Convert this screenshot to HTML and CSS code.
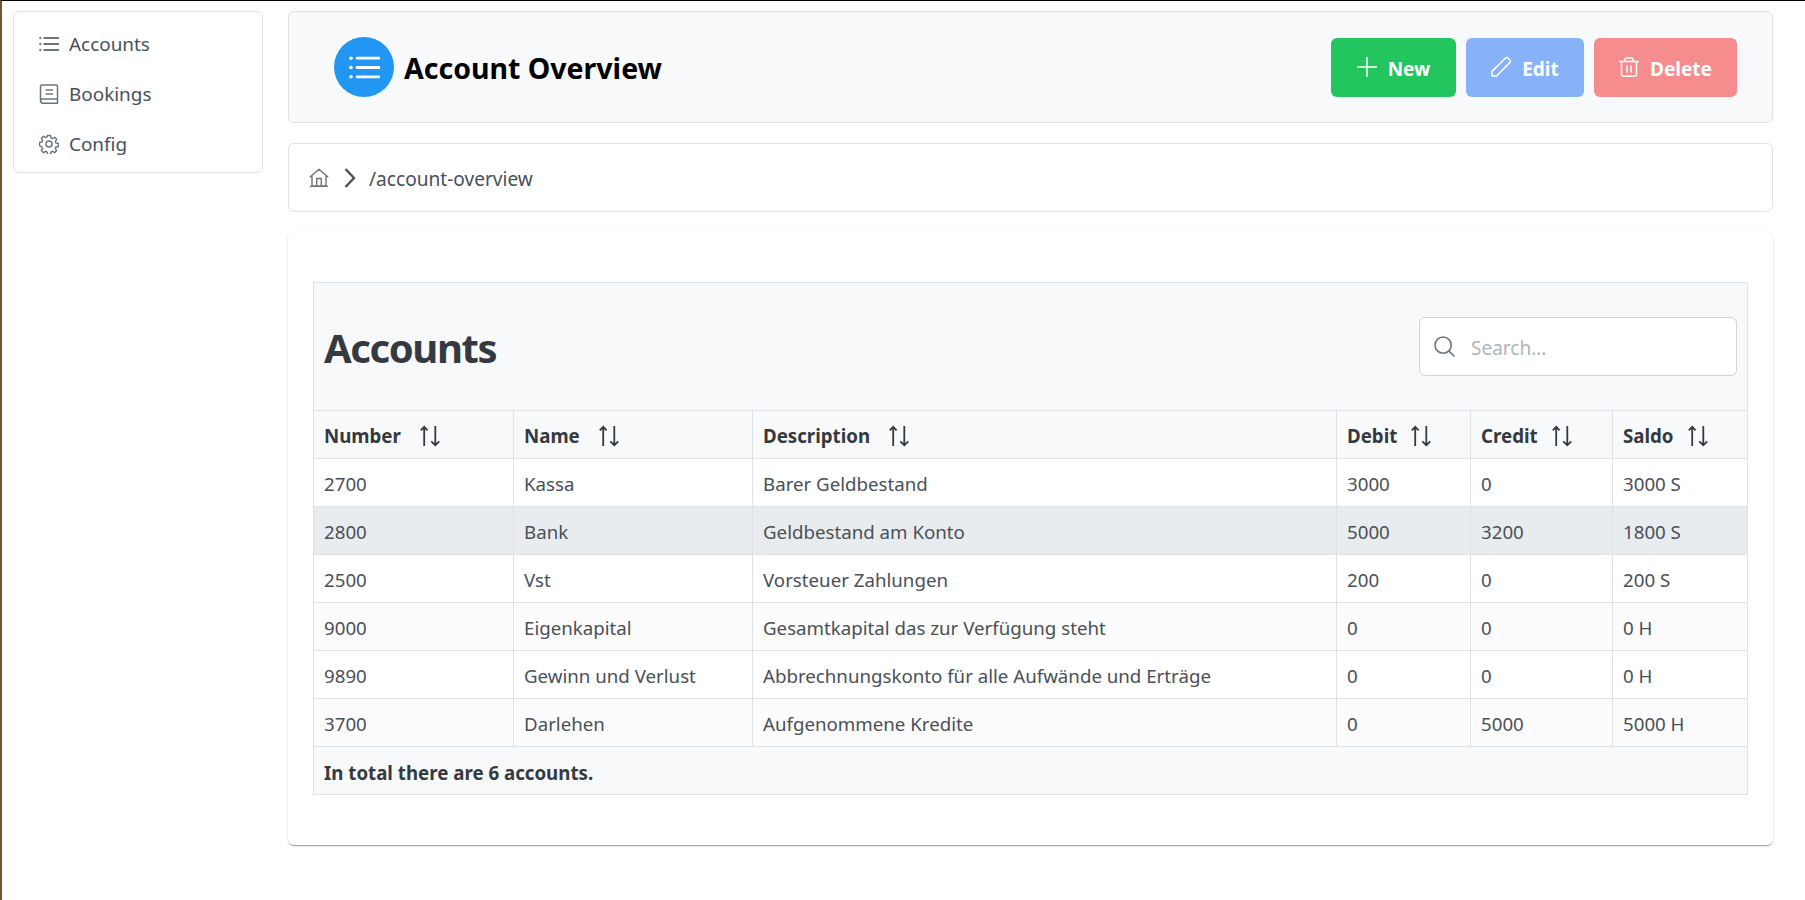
FILE: index.html
```html
<!DOCTYPE html>
<html lang="en">
<head>
<meta charset="utf-8">
<title>Account Overview</title>
<link rel="stylesheet" href="styles.css">
</head>
<body>
<svg class="defs" width="0" height="0" aria-hidden="true">
  <symbol id="list" viewBox="0 0 20 20"><path d="M5.200 4h14.300M5.200 10h14.300M5.200 16h14.300" fill="none" stroke="currentColor" stroke-width="1.800" stroke-linecap="round"/><circle cx="1.300" cy="4" r="1.150"/><circle cx="1.300" cy="10" r="1.150"/><circle cx="1.300" cy="16" r="1.150"/></symbol>
  <symbol id="sort" viewBox="0 0 20 22"><path d="M4.200 21V1.800M.8 5.400l3.400-3.600 3.400 3.600M15.300 1v19.200M11.300 16.400l4 3.800 4-3.800" fill="none" stroke="currentColor" stroke-width="1.800"/></symbol>
</svg>
<div class="layout">
  <nav class="sidebar">
    <a class="nav-item"><svg class="nav-icon"><use href="#list"/></svg>Accounts</a>
    <a class="nav-item"><svg class="nav-icon nav-line" viewBox="0 0 20 20"><path d="M1.500 16.300V2.200c0-.6.500-1.100 1.100-1.100h14.800c.6 0 1.100.5 1.100 1.100v17H3.700c-1.200 0-2.200-.9-2.200-2.900Zm0 0c0-.5 1-1.200 2.200-1.200h14.800M6.500 6h7.500M6.500 10h7.500"/></svg>Bookings</a>
    <a class="nav-item"><svg class="nav-icon nav-line" viewBox="0 0 20 20"><circle cx="10" cy="10" r="3"/><path d="M8.400 1h3.200l.5 2.600 1.500.7 2.300-1.400 2.200 2.200-1.400 2.300.7 1.500 2.600.5v3.200l-2.600.5-.7 1.500 1.400 2.300-2.200 2.200-2.300-1.400-1.500.7-.5 2.600H8.400l-.5-2.600-1.500-.7-2.300 1.400-2.200-2.200 1.400-2.300-.7-1.500L0 11.600V8.400l2.600-.5.7-1.500-1.400-2.300 2.200-2.200 2.300 1.400 1.500-.7Z" transform="translate(.500 .500) scale(.95)"/></svg>Config</a>
  </nav>
  <main class="main">
    <header class="panel toolbar">
      <div class="title-group">
        <span class="avatar"><svg class="avatar-icon"><use href="#list"/></svg></span>
        <h1 class="page-title">Account Overview</h1>
      </div>
      <div class="actions">
        <button class="btn btn-new"><svg class="btn-icon" viewBox="0 0 20 20"><path d="M10 0v20M0 10h20"/></svg><span class="btn-label">New</span></button>
        <button class="btn btn-edit"><svg class="btn-icon" viewBox="0 0 20 20"><path d="M1 19v-4.600L14.600 1c.7-.7 1.700-.7 2.400 0l2 2c.7.7.7 1.700 0 2.400L5.600 19Z"/></svg><span class="btn-label">Edit</span></button>
        <button class="btn btn-delete"><svg class="btn-icon" viewBox="0 0 20 20"><path d="M0 4.500h20M6 4.500V2.200C6 1.500 6.500 1 7.200 1h5.600c.7 0 1.200.5 1.200 1.200v2.300M2.500 4.500V17.500c0 1 .8 1.700 1.700 1.700h11.600c1 0 1.700-.7 1.700-1.700V4.500M8 8.500v7M12 8.500v7"/></svg><span class="btn-label">Delete</span></button>
      </div>
    </header>
    <div class="panel breadcrumb">
      <svg class="crumb-home" viewBox="0 0 20 20"><path d="M.8 9.200 10 1.200l9.200 8M3 7.800V18h14V7.800M1 18.400h18M7.700 18v-7.500h4.600V18"/></svg>
      <svg class="crumb-sep" viewBox="0 0 12 20"><path d="M1.500 1 10 10l-8.500 9"/></svg>
      <span class="crumb-text">/account-overview</span>
    </div>
    <section class="card">
      <div class="datatable">
        <div class="dt-header">
          <h2 class="dt-title">Accounts</h2>
          <label class="search">
            <svg class="search-icon" viewBox="0 0 20 20"><circle cx="8.700" cy="8.700" r="7.700"/><path d="m14.200 14.200 5.300 5.300"/></svg>
            <span class="search-placeholder">Search...</span>
          </label>
        </div>
        <table class="dt-table">
          <colgroup>
            <col class="c-number"><col class="c-name"><col class="c-desc"><col class="c-debit"><col class="c-credit"><col class="c-saldo">
          </colgroup>
          <thead>
            <tr>
              <th><span class="th-in gap-l">Number<svg class="sort"><use href="#sort"/></svg></span></th>
              <th><span class="th-in gap-l">Name<svg class="sort"><use href="#sort"/></svg></span></th>
              <th><span class="th-in gap-l">Description<svg class="sort"><use href="#sort"/></svg></span></th>
              <th><span class="th-in">Debit<svg class="sort"><use href="#sort"/></svg></span></th>
              <th><span class="th-in">Credit<svg class="sort"><use href="#sort"/></svg></span></th>
              <th><span class="th-in">Saldo<svg class="sort"><use href="#sort"/></svg></span></th>
            </tr>
          </thead>
          <tbody>
            <tr class="plain"><td>2700</td><td>Kassa</td><td>Barer Geldbestand</td><td>3000</td><td>0</td><td>3000 S</td></tr>
            <tr class="hover"><td>2800</td><td>Bank</td><td>Geldbestand am Konto</td><td>5000</td><td>3200</td><td>1800 S</td></tr>
            <tr class="plain"><td>2500</td><td>Vst</td><td>Vorsteuer Zahlungen</td><td>200</td><td>0</td><td>200 S</td></tr>
            <tr class="stripe"><td>9000</td><td>Eigenkapital</td><td>Gesamtkapital das zur Verfügung steht</td><td>0</td><td>0</td><td>0 H</td></tr>
            <tr class="plain"><td>9890</td><td>Gewinn und Verlust</td><td>Abbrechnungskonto für alle Aufwände und Erträge</td><td>0</td><td>0</td><td>0 H</td></tr>
            <tr class="stripe"><td>3700</td><td>Darlehen</td><td>Aufgenommene Kredite</td><td>0</td><td>5000</td><td>5000 H</td></tr>
          </tbody>
        </table>
        <div class="dt-footer">In total there are 6 accounts.</div>
      </div>
    </section>
  </main>
</div>
</body>
</html>
```

FILE: styles.css
```css
* { box-sizing: border-box; }
html, body { margin: 0; height: 100%; }
body {
  background: #fff;
  color: #495057;
  font-family: "Noto Sans", "Open Sans", sans-serif;
  font-size: 18.7px;
  border-top: 1px solid #000;
  border-left: 2px solid #75542b;
  overflow: hidden;
}
.defs { position: absolute; }
.layout { display: flex; align-items: flex-start; gap: 25px; padding: 10px 32px 0 11px; }

.sidebar {
  flex: 0 0 250px;
  height: 162px;
  border: 1px solid #dee2e6;
  border-radius: 6px;
  padding: 7px 0 0 25px;
  display: flex;
  flex-direction: column;
}
.nav-item { display: flex; align-items: center; gap: 10px; height: 50px; color: #495057; font-size: 18.9px; }
.nav-icon { width: 20px; height: 20px; color: #6c757d; fill: currentColor; flex: none; }
.nav-line { fill: none; stroke: currentColor; stroke-width: 1.5; stroke-linejoin: round; }

.main { flex: 1; min-width: 0; display: flex; flex-direction: column; gap: 20px; }
.panel { border: 1px solid #dee2e6; border-radius: 6px; }
.toolbar {
  height: 112px;
  background: #f8f9fa;
  display: flex;
  align-items: center;
  justify-content: space-between;
  padding: 0 35px 0 45px;
}
.title-group { display: flex; align-items: center; gap: 10px; }
.avatar { width: 60px; height: 60px; border-radius: 50%; background: #2196f3; color: #fff; display: flex; align-items: center; justify-content: center; }
.avatar-icon { width: 31px; height: 31px; fill: currentColor; }
.page-title { margin: 0; padding-top: 3px; color: #000; font-size: 28.5px; font-weight: 700; line-height: 1; }
.actions { display: flex; gap: 10px; }
.btn {
  height: 59px;
  border: 0;
  border-radius: 6px;
  padding: 0;
  display: flex;
  align-items: center;
  justify-content: center;
  gap: 11px;
  color: #fff;
  font: 700 19px "Noto Sans", "Open Sans", sans-serif;
}
.btn-label { padding-top: 3px; }
.btn-icon { width: 20px; height: 20px; fill: none; stroke: currentColor; stroke-width: 1.5; stroke-linejoin: round; }
.btn-new { width: 125px; background: #22c55e; }
.btn-edit { width: 118px; background: #88b2f8; }
.btn-delete { width: 143px; background: #f58d8f; }

.breadcrumb { height: 69px; display: flex; align-items: center; padding-left: 20px; font-size: 19.1px; }
.crumb-home { width: 20px; height: 20px; color: #6c757d; fill: none; stroke: currentColor; stroke-width: 1.4; stroke-linejoin: round; }
.crumb-sep { width: 12px; height: 20px; margin: 0 13px 0 15px; color: #495057; fill: none; stroke: currentColor; stroke-width: 2.4; }
.crumb-text { padding-top: 3px; }

.card {
  height: 613px;
  border-radius: 6px;
  background: #fff;
  box-shadow: 0 2px 1px -1px rgba(0,0,0,.2), 0 1px 1px 0 rgba(0,0,0,.14), 0 1px 3px 0 rgba(0,0,0,.12);
  padding: 50px 25px;
}
.datatable { color: #495057; }
.dt-header {
  height: 128px;
  background: #f8f9fa;
  border: 1px solid #dee2e6;
  border-bottom: 0;
  display: flex;
  align-items: center;
  justify-content: space-between;
  padding: 0 10px;
}
.dt-title { margin: 0; padding-top: 3px; color: #343a40; font-size: 40px; letter-spacing: -1.4px; font-weight: 700; line-height: 1; }
.search {
  width: 318px;
  height: 59px;
  background: #fff;
  border: 1px solid #ced4da;
  border-radius: 6px;
  display: flex;
  align-items: center;
  gap: 16px;
  padding-left: 14px;
}
.search-icon { width: 21px; height: 21px; color: #6c757d; fill: none; stroke: currentColor; stroke-width: 1.5; }
.search-placeholder { padding-top: 2px; color: #adb5bd; font-size: 19px; }

.dt-table { width: 1434px; border-collapse: collapse; table-layout: fixed; }
.c-number { width: 200px; }
.c-name { width: 239px; }
.c-desc { width: 584px; }
.c-debit { width: 134px; }
.c-credit { width: 142px; }
.c-saldo { width: 135px; }
.dt-table th, .dt-table td { border: 1px solid #dee2e6; padding: 2px 10px 0; height: 48px; text-align: left; white-space: nowrap; }
.dt-table th { background: #f8f9fa; color: #343a40; font-weight: 700; }
.th-in { display: flex; align-items: center; gap: 14px; }
.th-in.gap-l { gap: 19px; }
.sort { width: 20px; height: 22px; margin-top: 1px; color: #343a40; flex: none; }
.plain { background: #fff; }
.hover { background: #e9ecef; }
.stripe { background: #fcfcfc; }
.dt-footer {
  height: 48px;
  background: #f8f9fa;
  border: 1px solid #dee2e6;
  border-top: 0;
  color: #343a40;
  font-weight: 700;
  display: flex;
  align-items: center;
  padding: 3px 10px 0;
}
```
